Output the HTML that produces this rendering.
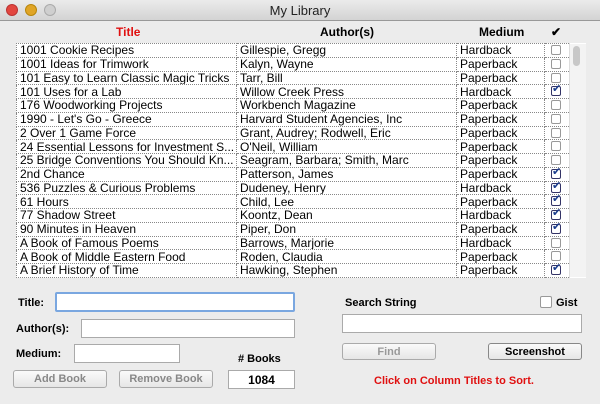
<!DOCTYPE html>
<html><head><style>
*{box-sizing:border-box;margin:0;padding:0}
body{width:600px;height:404px;background:#ececec;font-family:"Liberation Sans",sans-serif;position:relative;overflow:hidden;font-size:12px;color:#000}
.tb{position:absolute;left:0;top:0;width:600px;height:21px;background:linear-gradient(#ebebeb,#d3d3d3);border-bottom:1px solid #999;text-align:center;font-size:13px;line-height:21px;color:#222}
.dot{position:absolute;top:4px;width:12px;height:12px;border-radius:50%}
.hd{position:absolute;top:25px;font-weight:bold;font-size:12px}
table{position:absolute;left:16px;top:43px;border-collapse:collapse;background:#fff}
td{height:13.75px;border:1px dotted #888;padding:0 0 0 3px;font-size:12px;line-height:12px;white-space:nowrap;overflow:hidden}
.cb{display:inline-block;width:10px;height:10px;border:1px solid #999;border-radius:2px;background:#fff;vertical-align:middle;margin-left:3px;margin-top:-2px}
.ck{background:#fff;border-color:#336;position:relative}
.ck:after{content:"✔";position:absolute;left:0;top:-4px;font-size:11px;color:#1a3c8c}
.inp{position:absolute;background:#fff;border:1px solid #aaa}
.lbl{position:absolute;font-weight:bold;font-size:11px}
.btn{position:absolute;border:1px solid #aaa;border-radius:3px;background:linear-gradient(#fafafa,#e6e6e6);text-align:center;font-weight:bold;font-size:11px;line-height:16px}
</style></head><body>
<div class="tb">My Library</div>
<div class="dot" style="left:6px;background:#e2463f;border:1px solid #b33"></div>
<div class="dot" style="left:25px;background:#e0a526;border:1px solid #b8860b"></div>
<div class="dot" style="left:44px;background:#cfcfcf;border:1px solid #aaa"></div>
<div class="hd" style="left:116px;color:#e01010">Title</div>
<div class="hd" style="left:320px">Author(s)</div>
<div class="hd" style="left:479px">Medium</div>
<div class="hd" style="left:551px">✔</div>
<table>
<colgroup><col style="width:220px"><col style="width:220px"><col style="width:88px"><col style="width:25px"><col style="width:16px"></colgroup>
<tr><td>1001 Cookie Recipes</td><td>Gillespie, Gregg</td><td>Hardback</td><td><span class="cb"></span></td><td rowspan="17" style="background:#f3f3f3;border:none;border-left:1px solid #ddd;vertical-align:top;padding:2px 3px"><div style="width:7px;height:20px;background:#c8c8c8;border-radius:4px"></div></td></tr>
<tr><td>1001 Ideas for Trimwork</td><td>Kalyn, Wayne</td><td>Paperback</td><td><span class="cb"></span></td></tr>
<tr><td>101 Easy to Learn Classic Magic Tricks</td><td>Tarr, Bill</td><td>Paperback</td><td><span class="cb"></span></td></tr>
<tr><td>101 Uses for a Lab</td><td>Willow Creek Press</td><td>Hardback</td><td><span class="cb ck"></span></td></tr>
<tr><td>176 Woodworking Projects</td><td>Workbench Magazine</td><td>Paperback</td><td><span class="cb"></span></td></tr>
<tr><td>1990 - Let's Go - Greece</td><td>Harvard Student Agencies, Inc</td><td>Paperback</td><td><span class="cb"></span></td></tr>
<tr><td>2 Over 1 Game Force</td><td>Grant, Audrey; Rodwell, Eric</td><td>Paperback</td><td><span class="cb"></span></td></tr>
<tr><td>24 Essential Lessons for Investment S...</td><td>O'Neil, William</td><td>Paperback</td><td><span class="cb"></span></td></tr>
<tr><td>25 Bridge Conventions You Should Kn...</td><td>Seagram, Barbara; Smith, Marc</td><td>Paperback</td><td><span class="cb"></span></td></tr>
<tr><td>2nd Chance</td><td>Patterson, James</td><td>Paperback</td><td><span class="cb ck"></span></td></tr>
<tr><td>536 Puzzles &amp; Curious Problems</td><td>Dudeney, Henry</td><td>Hardback</td><td><span class="cb ck"></span></td></tr>
<tr><td>61 Hours</td><td>Child, Lee</td><td>Paperback</td><td><span class="cb ck"></span></td></tr>
<tr><td>77 Shadow Street</td><td>Koontz, Dean</td><td>Hardback</td><td><span class="cb ck"></span></td></tr>
<tr><td>90 Minutes in Heaven</td><td>Piper, Don</td><td>Paperback</td><td><span class="cb ck"></span></td></tr>
<tr><td>A Book of Famous Poems</td><td>Barrows, Marjorie</td><td>Hardback</td><td><span class="cb"></span></td></tr>
<tr><td>A Book of Middle Eastern Food</td><td>Roden, Claudia</td><td>Paperback</td><td><span class="cb"></span></td></tr>
<tr><td>A Brief History of Time</td><td>Hawking, Stephen</td><td>Paperback</td><td><span class="cb ck"></span></td></tr>
</table>
<div class="lbl" style="left:18px;top:297px">Title:</div>
<div class="inp" style="left:55px;top:292px;width:240px;height:20px;border:2px solid #7aa7e0;border-radius:2px"></div>
<div class="lbl" style="left:16px;top:323px">Author(s):</div>
<div class="inp" style="left:81px;top:319px;width:214px;height:19px"></div>
<div class="lbl" style="left:16px;top:348px">Medium:</div>
<div class="inp" style="left:74px;top:344px;width:106px;height:19px"></div>
<div class="lbl" style="left:238px;top:353px">#&nbsp;Books</div>
<div class="btn" style="left:13px;top:370px;width:94px;height:18px;color:#888">Add Book</div>
<div class="btn" style="left:119px;top:370px;width:94px;height:18px;color:#888">Remove Book</div>
<div class="inp" style="left:228px;top:370px;width:67px;height:19px;text-align:center;font-weight:bold;font-size:12px;line-height:18px">1084</div>
<div class="lbl" style="left:345px;top:297px">Search String</div>
<div class="cb" style="position:absolute;left:540px;top:296px;margin:0;width:12px;height:12px"></div>
<div class="lbl" style="left:556px;top:297px">Gist</div>
<div class="inp" style="left:342px;top:314px;width:240px;height:19px"></div>
<div class="btn" style="left:342px;top:343px;width:94px;height:17px;color:#999">Find</div>
<div class="btn" style="left:488px;top:343px;width:94px;height:17px;border-color:#888">Screenshot</div>
<div class="lbl" style="left:374px;top:375px;color:#e01010">Click on Column Titles to Sort.</div>
</body></html>
